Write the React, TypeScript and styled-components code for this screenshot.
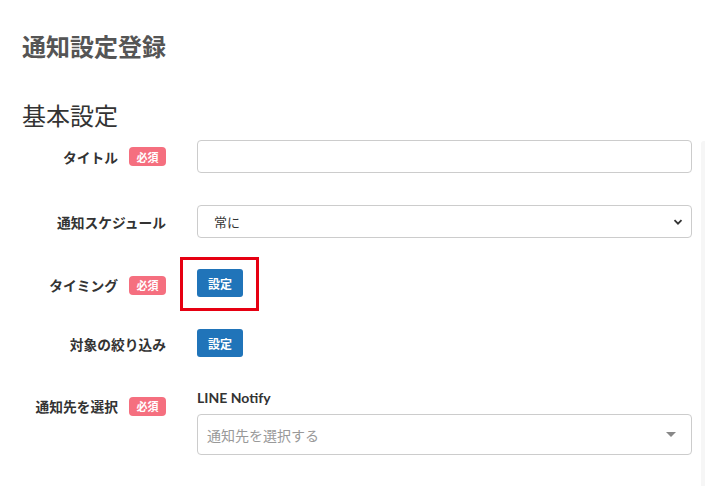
import React, { useState } from 'react';
import styled, { createGlobalStyle } from 'styled-components';

const GlobalStyle = createGlobalStyle`
  html, body {
    margin: 0;
    padding: 0;
    background: #fff;
  }
  body {
    font-family: Lato, "Noto Sans CJK JP", sans-serif;
    color: #333;
  }
`;

const Page = styled.div`
  display: flex;
  width: 705px;
  min-height: 486px;
`;

const Main = styled.div`
  flex: 1;
  padding: 0 9px 0 22px;
`;

const SideStrip = styled.div`
  width: 4px;
  margin-top: 141px;
  background: #f6f6f6;
  border-top-left-radius: 3px;
`;

const PageTitle = styled.h1`
  margin: 33px 0 0;
  font-size: 24px;
  line-height: 28px;
  font-weight: 700;
  color: #555;
`;

const SectionTitle = styled.h2`
  margin: 41px 0 0;
  font-size: 24px;
  line-height: 28px;
  font-weight: 400;
  color: #333;
`;

const Form = styled.div`
  margin-top: 10px;
  margin-left: -22px;
`;

const Row = styled.div<{ $gap: number; $top?: boolean }>`
  display: grid;
  grid-template-columns: 166px 1fr;
  column-gap: 31px;
  align-items: ${({ $top }) => ($top ? 'start' : 'center')};
  margin-bottom: ${({ $gap }) => $gap}px;
`;

const LabelCell = styled.div<{ $top?: number }>`
  display: flex;
  justify-content: flex-end;
  align-items: center;
  gap: 11px;
  padding-top: ${({ $top }) => $top ?? 0}px;
`;

const Label = styled.span`
  font-size: 13.75px;
  font-weight: 700;
  color: #333;
  white-space: nowrap;
`;

const Badge = styled.span`
  display: inline-flex;
  align-items: center;
  justify-content: center;
  width: 37px;
  height: 19px;
  border-radius: 4px;
  background: #f56f7f;
  color: #fff;
  font-size: 11px;
  font-weight: 700;
`;

const TextInput = styled.input`
  box-sizing: border-box;
  width: 100%;
  height: 33px;
  border: 1px solid #ccc;
  border-radius: 4px;
  padding: 0 12px;
  font-size: 13px;
  font-family: inherit;
  outline: none;
`;

const SelectBox = styled.div`
  box-sizing: border-box;
  display: flex;
  align-items: center;
  justify-content: space-between;
  width: 100%;
  height: 33px;
  border: 1px solid #ccc;
  border-radius: 4px;
  padding: 0 8px 0 16px;
  font-size: 13px;
  color: #333;
`;

const Button = styled.button`
  width: 46px;
  height: 28px;
  border: none;
  border-radius: 3px;
  background: #2074b9;
  color: #fff;
  font-family: inherit;
  font-size: 12px;
  font-weight: 700;
  cursor: pointer;
`;

const Highlight = styled.div`
  position: relative;
  justify-self: start;
  &::after {
    content: '';
    position: absolute;
    left: -17px;
    right: -16px;
    top: -12px;
    bottom: -14px;
    border: 3px solid #e60012;
    pointer-events: none;
  }
`;

const FieldStack = styled.div`
  display: flex;
  flex-direction: column;
  gap: 8px;
`;

const FieldCaption = styled.div`
  font-size: 14px;
  font-weight: 700;
  color: #333;
  line-height: 17px;
`;

const Picker = styled.div`
  box-sizing: border-box;
  display: flex;
  align-items: center;
  justify-content: space-between;
  height: 41px;
  border: 1px solid #ccc;
  border-radius: 4px;
  padding: 0 15px 0 9px;
  font-size: 14px;
  color: #999;
`;

const Caret = styled.span`
  width: 0;
  height: 0;
  border-left: 5px solid transparent;
  border-right: 5px solid transparent;
  border-top: 5px solid #888;
`;

const Chevron = () => (
  <svg width="10" height="10" viewBox="0 0 10 10">
    <path d="M1.5 3.2 L5 6.7 L8.5 3.2" fill="none" stroke="#333" strokeWidth="1.8" />
  </svg>
);

const App = () => {
  const [title, setTitle] = useState('');

  return (
    <>
      <GlobalStyle />
      <Page>
        <Main>
          <PageTitle>通知設定登録</PageTitle>
          <SectionTitle>基本設定</SectionTitle>
          <Form>
            <Row $gap={32}>
              <LabelCell>
                <Label>タイトル</Label>
                <Badge>必須</Badge>
              </LabelCell>
              <TextInput value={title} onChange={(e) => setTitle(e.target.value)} />
            </Row>
            <Row $gap={31}>
              <LabelCell>
                <Label>通知スケジュール</Label>
              </LabelCell>
              <SelectBox>
                <span>常に</span>
                <Chevron />
              </SelectBox>
            </Row>
            <Row $gap={32} $top>
              <LabelCell $top={6}>
                <Label>タイミング</Label>
                <Badge>必須</Badge>
              </LabelCell>
              <Highlight>
                <Button>設定</Button>
              </Highlight>
            </Row>
            <Row $gap={32} $top>
              <LabelCell $top={5}>
                <Label>対象の絞り込み</Label>
              </LabelCell>
              <div>
                <Button>設定</Button>
              </div>
            </Row>
            <Row $gap={10} $top>
              <LabelCell $top={7}>
                <Label>通知先を選択</Label>
                <Badge>必須</Badge>
              </LabelCell>
              <FieldStack>
                <FieldCaption>LINE Notify</FieldCaption>
                <Picker>
                  <span>通知先を選択する</span>
                  <Caret />
                </Picker>
              </FieldStack>
            </Row>
          </Form>
        </Main>
        <SideStrip />
      </Page>
    </>
  );
};

export default App;
